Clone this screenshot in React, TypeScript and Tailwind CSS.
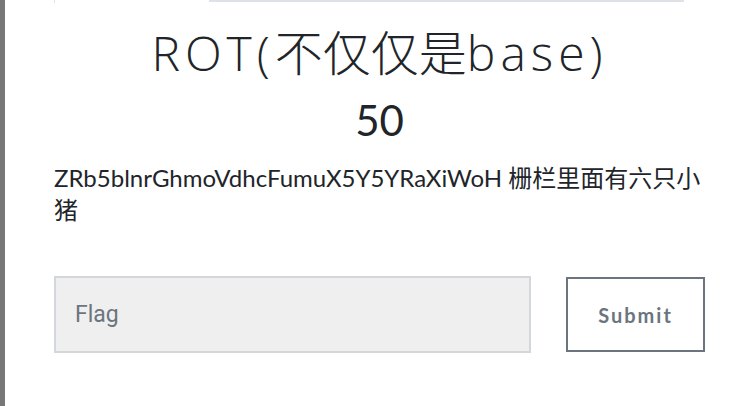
export default function App() {
  return (
    <div className="flex h-[406px] w-[735px] overflow-hidden bg-white font-['Lato','Noto_Sans_CJK_SC',sans-serif] text-[#212529]">
      <div className="w-[5px] shrink-0 bg-[#777777]" />
      <div className="w-[651px] pl-[49px] box-content">
        <div className="flex h-[3px]">
          <div className="h-[3px] w-[155px] border-l border-[#dee2e6]" />
          <div className="h-[2px] w-[475px] bg-[#dee2e6]" />
        </div>
        <h2 className="mt-[22px] text-center font-['Open_Sans','Noto_Sans_CJK_SC',sans-serif] text-[48px] font-light leading-[56px]">
          <span className="tracking-[5px]">ROT(</span>不仅仅是<span className="tracking-[5px]">base)</span>
        </h2>
        <h3 className="mt-[14px] text-center text-[42px] leading-[1.2]">50</h3>
        <p className="mt-[17px] text-[24px] leading-[32px]">
          ZRb5blnrGhmoVdhcFumuX5Y5YRaXiWoH 栅栏里面有六只小猪
        </p>
        <div className="mt-[50px] flex items-center justify-between">
          <input
            placeholder="Flag"
            className="h-[77px] w-[477px] border-2 border-[#d3d6da] bg-[#efefef] px-[19px] font-['Liberation_Sans_Narrow','Roboto',sans-serif] text-[23px] text-[#495057] outline-none placeholder:text-[#6c757d]"
          />
          <button className="h-[75px] w-[139px] border-2 border-[#6c757d] bg-white text-[20px] font-bold tracking-[2px] text-[#6c757d]">
            Submit
          </button>
        </div>
      </div>
    </div>
  );
}
